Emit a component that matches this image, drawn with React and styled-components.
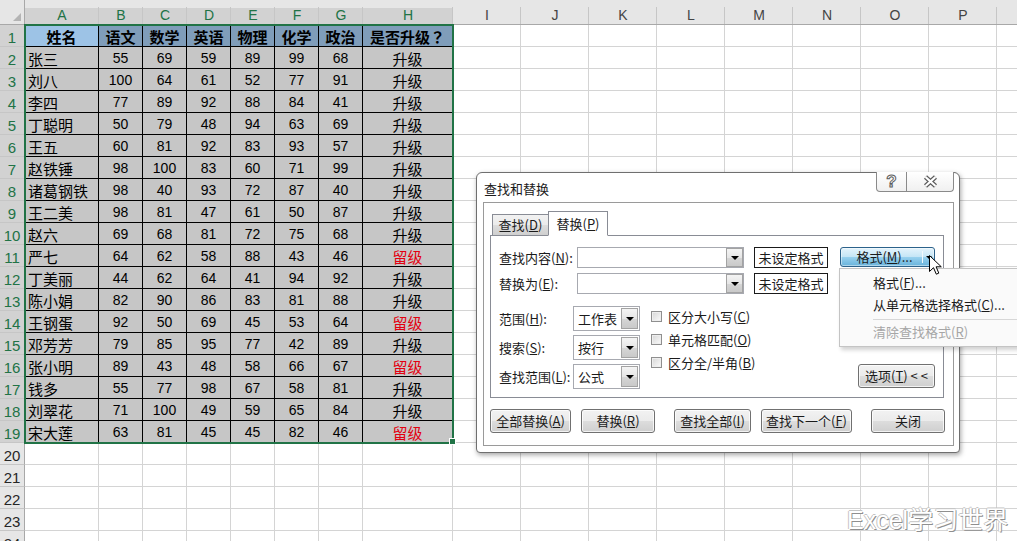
import React from "react";
import styled, { createGlobalStyle } from "styled-components";

const GlobalStyle = createGlobalStyle`
  html, body {
    margin: 0;
    padding: 0;
    background: #ffffff;
  }
  body {
    width: 1017px;
    height: 541px;
    overflow: hidden;
  }
`;

const letters = "ABCDEFGHIJKLMNOPQ".split("");
const headers = ["姓名", "语文", "数学", "英语", "物理", "化学", "政治", "是否升级？"];
const students = [
  ["张三", 55, 69, 59, 89, 99, 68, "升级"],
  ["刘八", 100, 64, 61, 52, 77, 91, "升级"],
  ["李四", 77, 89, 92, 88, 84, 41, "升级"],
  ["丁聪明", 50, 79, 48, 94, 63, 69, "升级"],
  ["王五", 60, 81, 92, 83, 93, 57, "升级"],
  ["赵铁锤", 98, 100, 83, 60, 71, 99, "升级"],
  ["诸葛钢铁", 98, 40, 93, 72, 87, 40, "升级"],
  ["王二美", 98, 81, 47, 61, 50, 87, "升级"],
  ["赵六", 69, 68, 81, 72, 75, 68, "升级"],
  ["严七", 64, 62, 58, 88, 43, 46, "留级"],
  ["丁美丽", 44, 62, 64, 41, 94, 92, "升级"],
  ["陈小娟", 82, 90, 86, 83, 81, 88, "升级"],
  ["王钢蛋", 92, 50, 69, 45, 53, 64, "留级"],
  ["邓芳芳", 79, 85, 95, 77, 42, 89, "升级"],
  ["张小明", 89, 43, 48, 58, 66, 67, "留级"],
  ["钱多", 55, 77, 98, 67, 58, 81, "升级"],
  ["刘翠花", 71, 100, 49, 59, 65, 84, "升级"],
  ["宋大莲", 63, 81, 45, 45, 82, 46, "留级"],
];
const ROWS = 24;

/* ---------- spreadsheet ---------- */

const Page = styled.div`
  position: relative;
  width: 1017px;
  height: 541px;
  overflow: hidden;
  font-family: "Liberation Sans", "Noto Sans CJK SC", sans-serif;
`;

const Sheet = styled.div`
  display: grid;
  grid-template-columns: 25px 74px repeat(6, 44px) 90px repeat(9, 68px);
  grid-template-rows: 25px repeat(${ROWS}, 22px);
  width: max-content;
`;

const Corner = styled.div`
  box-sizing: border-box;
  display: flex;
  align-items: flex-end;
  justify-content: flex-end;
  padding: 0 3px 3px 0;
  background: #e6e6e6;
  border-right: 1px solid #a8a8a8;
  border-bottom: 1px solid #a8a8a8;
`;

const ColHead = styled.div`
  box-sizing: border-box;
  display: flex;
  align-items: flex-end;
  justify-content: center;
  padding-bottom: 1px;
  line-height: 16px;
  font-size: 14px;
  color: ${(p) => (p.$selected ? "#217346" : "#444444")};
  background:
    linear-gradient(#c6c6c6, #c6c6c6) right bottom / 1px 17px no-repeat,
    linear-gradient(#e6e6e6 0 8px, ${(p) => (p.$selected ? "#d2d2d2" : "#e6e6e6")} 8px);
  border-bottom: 1px solid #a8a8a8;
`;

const RowHead = styled.div`
  box-sizing: border-box;
  display: flex;
  align-items: center;
  justify-content: center;
  padding-top: 3px;
  font-size: 15px;
  color: ${(p) => (p.$selected ? "#217346" : "#262626")};
  background: ${(p) => (p.$selected ? "#d2d2d2" : "#e6e6e6")};
  border-right: 1px solid #a8a8a8;
  border-bottom: 1px solid #c6c6c6;
`;

const Cell = styled.div`
  box-sizing: border-box;
  display: flex;
  align-items: center;
  justify-content: ${(p) => (p.$left ? "flex-start" : "center")};
  padding: 1px 0 0 ${(p) => (p.$left ? "3px" : "0")};
  background: ${(p) => p.$fill || "#ffffff"};
  border-right: 1px solid ${(p) => (p.$table ? "#000000" : "#d4d4d4")};
  border-bottom: 1px solid ${(p) => (p.$table ? "#000000" : "#d4d4d4")};
  color: ${(p) => (p.$red ? "#e3000f" : "#000000")};
  font-weight: ${(p) => (p.$bold ? 700 : 400)};
  font-size: ${(p) => (p.$num ? "14px" : "15px")};
  white-space: nowrap;
  overflow: hidden;
`;

const FullWidth = styled.span`
  font-family: "Noto Sans CJK TC", "Noto Sans CJK SC", sans-serif;
`;

const Selection = styled.div`
  position: absolute;
  left: 24px;
  top: 24px;
  width: 430px;
  height: 420px;
  box-sizing: border-box;
  border: 2px solid #217346;
  pointer-events: none;
`;

const FillHandle = styled.div`
  position: absolute;
  left: 449px;
  top: 438px;
  width: 7px;
  height: 7px;
  box-sizing: border-box;
  background: #217346;
  border: 1px solid #ffffff;
`;

/* ---------- dialog ---------- */

const Dialog = styled.div`
  position: absolute;
  left: 476px;
  top: 172px;
  width: 484px;
  height: 281px;
  box-sizing: border-box;
  display: flex;
  flex-direction: column;
  background: #ffffff;
  border: 1px solid #6f6f6f;
  border-radius: 6px 6px 4px 4px;
  box-shadow: 1px 2px 5px rgba(0, 0, 0, 0.35);
  font-family: "Noto Sans CJK SC", "Liberation Sans", sans-serif;
  font-size: 13px;
  line-height: 16px;
  color: #1b1b1b;
`;

const TitleBar = styled.div`
  flex: none;
  height: 29px;
  display: flex;
  align-items: flex-start;
  justify-content: space-between;
  padding-left: 7px;
`;

const Title = styled.div`
  margin-top: 8px;
  font-size: 13px;
`;

const Caption = styled.div`
  display: flex;
  height: 20px;
  margin: -1px 5px 0 0;
  box-sizing: border-box;
  border: 1px solid #8a8a8a;
  border-top: none;
  border-radius: 0 0 4px 4px;
  background: linear-gradient(#ffffff, #f0f0f0);
`;

const CaptionButton = styled.div`
  width: ${(p) => p.$w}px;
  display: flex;
  align-items: center;
  justify-content: center;
  & + & {
    border-left: 1px solid #8a8a8a;
  }
`;

const HelpGlyph = styled.span`
  font-family: "Liberation Sans", sans-serif;
  font-weight: 700;
  font-size: 17px;
  color: #ffffff;
  -webkit-text-stroke: 1px #5c5c5c;
`;

const Client = styled.div`
  flex: 1;
  margin: 0 5px 6px 6px;
  border: 1px solid #9a9a9a;
  padding: 8px 0 0 6px;
  display: flex;
  flex-direction: column;
`;

const TabStrip = styled.div`
  display: flex;
  align-items: flex-end;
  height: 24px;
  padding-left: 2px;
  position: relative;
  z-index: 1;
`;

const Tab = styled.div`
  box-sizing: border-box;
  width: ${(p) => p.$w}px;
  height: ${(p) => (p.$active ? 25 : 21)}px;
  margin-bottom: ${(p) => (p.$active ? "-1px" : "0")};
  display: flex;
  align-items: center;
  justify-content: center;
  border: 1px solid #898c95;
  border-bottom: ${(p) => (p.$active ? "1px solid #ffffff" : "none")};
  background: ${(p) =>
    p.$active
      ? "#ffffff"
      : "linear-gradient(#f2f2f2 0%, #ebebeb 50%, #dddddd 51%, #cfcfcf 100%)"};
  & + & {
    margin-left: -1px;
  }
`;

const Pane = styled.div`
  width: 454px;
  box-sizing: border-box;
  border: 1px solid #898c95;
  padding: 11px 8px 8px 8px;
  display: flex;
  flex-direction: column;
`;

const FieldRow = styled.div`
  display: flex;
  align-items: center;
  height: 21px;
  & + & {
    margin-top: 5px;
  }
`;

const Label = styled.div`
  flex: none;
  width: ${(p) => p.$w}px;
  white-space: nowrap;
`;

const Key = styled.span`
  text-decoration: underline;
  text-underline-offset: 1px;
`;

const Combo = styled.div`
  box-sizing: border-box;
  width: ${(p) => p.$w}px;
  height: 100%;
  display: flex;
  align-items: stretch;
  border: 1px solid #a7a9b0;
  background: #ffffff;
`;

const ComboText = styled.div`
  flex: 1;
  display: flex;
  align-items: center;
  padding-left: 4px;
  white-space: nowrap;
`;

const DropButton = styled.div`
  box-sizing: border-box;
  width: 17px;
  margin: ${(p) => (p.$inset ? "1px" : "0")};
  display: flex;
  align-items: center;
  justify-content: center;
  border: 1px solid #a3a3a3;
  background: linear-gradient(#f4f4f4 0%, #e6e6e6 50%, #d6d6d6 51%, #c9c9c9 100%);
`;

const Arrow = styled.div`
  width: 0;
  height: 0;
  border-left: 4px solid transparent;
  border-right: 4px solid transparent;
  border-top: 4px solid #000000;
`;

const FormatBox = styled.div`
  box-sizing: border-box;
  width: 74px;
  height: 100%;
  margin-left: 10px;
  display: flex;
  align-items: center;
  justify-content: center;
  border: 1px solid #1a1a1a;
  white-space: nowrap;
`;

const SplitButton = styled.div`
  box-sizing: border-box;
  width: 95px;
  height: 20px;
  margin: -1px 0 0 12px;
  display: flex;
  border: 1px solid #2c628b;
  border-radius: 3px;
  background: linear-gradient(#e5f4fc 0%, #c4e5f6 50%, #98d1ef 51%, #68b3db 100%);
  box-shadow: inset 0 0 0 1px rgba(255, 255, 255, 0.45);
`;

const SplitMain = styled.div`
  flex: 1;
  display: flex;
  align-items: center;
  justify-content: center;
  padding-left: 6px;
  white-space: nowrap;
`;

const SplitArrow = styled.div`
  width: 11px;
  display: flex;
  align-items: center;
  justify-content: center;
  border-left: 1px solid #f2f9fd;
  margin: 3px 0;
`;

const SmallArrow = styled(Arrow)`
  border-left-width: 3px;
  border-right-width: 3px;
  border-top-width: 3px;
`;

const Lower = styled.div`
  display: flex;
  margin-top: 12px;
`;

const SelectColumn = styled.div`
  display: flex;
  flex-direction: column;
`;

const SelectRow = styled.div`
  display: flex;
  align-items: center;
  height: 25px;
  & + & {
    margin-top: 4px;
  }
`;

const CheckColumn = styled.div`
  display: flex;
  flex-direction: column;
  margin: -1px 0 0 11px;
`;

const CheckRow = styled.div`
  display: flex;
  align-items: center;
  gap: 6px;
  height: 23px;
  white-space: nowrap;
`;

const CheckBox = styled.div`
  box-sizing: border-box;
  width: 11px;
  height: 11px;
  border: 1px solid #8f8f8f;
  background: linear-gradient(135deg, #d6d6d6, #fbfbfb);
  box-shadow: inset 0 0 0 1px #eeeeee;
`;

const Button = styled.div`
  box-sizing: border-box;
  flex: none;
  width: ${(p) => p.$w}px;
  height: 24px;
  margin-left: ${(p) => p.$gap || 0}px;
  display: flex;
  align-items: center;
  justify-content: center;
  border: 1px solid #707070;
  border-radius: 3px;
  background: linear-gradient(#f2f2f2 0%, #ebebeb 49%, #dddddd 50%, #cfcfcf 100%);
  box-shadow: inset 0 0 0 1px rgba(255, 255, 255, 0.75);
  white-space: nowrap;
`;

const OptionsButton = styled(Button)`
  margin-left: auto;
  align-self: flex-end;
  margin-bottom: 1px;
`;

const ButtonRow = styled.div`
  display: flex;
  margin-top: 11px;
`;

/* ---------- overlays ---------- */

const Menu = styled.div`
  position: absolute;
  left: 839px;
  top: 268px;
  width: 200px;
  box-sizing: border-box;
  padding: 3px 0;
  background: #fafafa;
  border: 1px solid #c4c4c4;
  box-shadow: 2px 3px 4px rgba(0, 0, 0, 0.18);
  font-family: "Noto Sans CJK SC", "Liberation Sans", sans-serif;
  font-size: 13px;
  line-height: 16px;
`;

const MenuItem = styled.div`
  height: 22px;
  display: flex;
  align-items: center;
  padding-left: 33px;
  color: ${(p) => (p.$disabled ? "#a6a6a6" : "#1b1b1b")};
  white-space: nowrap;
`;

const MenuSeparator = styled.div`
  height: 1px;
  margin: 3px 0 1px 33px;
  background: #d7d7d7;
`;

const Pointer = styled.svg`
  position: absolute;
  left: 929px;
  top: 255px;
`;

const Watermark = styled.div`
  position: absolute;
  left: 847px;
  top: 500px;
  font-family: "Liberation Sans", "Noto Sans CJK SC", sans-serif;
  font-size: 25px;
  color: #ffffff;
  text-shadow: 1px 1px 0 #8f8f8f, -1px 0 0 #c4c4c4, 0 -1px 0 #c4c4c4;
  white-space: nowrap;
  pointer-events: none;
`;

function Spreadsheet() {
  const cells = [];
  cells.push(
    <Corner key="corner">
      <svg width="8" height="8" viewBox="0 0 8 8">
        <path d="M8 0 L8 8 L0 8 Z" fill="#b4b4b4" />
      </svg>
    </Corner>
  );
  letters.forEach((l, i) => {
    cells.push(
      <ColHead key={`h${l}`} $selected={i < 8}>
        {l}
      </ColHead>
    );
  });
  for (let r = 1; r <= ROWS; r++) {
    cells.push(
      <RowHead key={`r${r}`} $selected={r <= 19}>
        {r}
      </RowHead>
    );
    letters.forEach((l, c) => {
      const key = `${l}${r}`;
      if (r <= 19 && c < 8) {
        if (r === 1) {
          const text = headers[c];
          cells.push(
            <Cell key={key} $table $bold $fill={c === 0 ? "#9dc3e6" : "#7f9dba"}>
              {text.endsWith("？") ? (
                <>
                  {text.slice(0, -1)}
                  <FullWidth>？</FullWidth>
                </>
              ) : (
                text
              )}
            </Cell>
          );
        } else {
          const value = students[r - 2][c];
          cells.push(
            <Cell
              key={key}
              $table
              $fill="#c6c6c6"
              $left={c === 0}
              $num={typeof value === "number"}
              $red={value === "留级"}
            >
              {value}
            </Cell>
          );
        }
      } else {
        cells.push(<Cell key={key} />);
      }
    });
  }
  return <Sheet>{cells}</Sheet>;
}

function FindReplaceDialog() {
  return (
    <Dialog>
      <TitleBar>
        <Title>查找和替换</Title>
        <Caption>
          <CaptionButton $w={29}>
            <HelpGlyph>?</HelpGlyph>
          </CaptionButton>
          <CaptionButton $w={46}>
            <svg width="15" height="13" viewBox="0 0 15 13">
              <path d="M2.5 2 L12.5 11 M12.5 2 L2.5 11" stroke="#5c5c5c" strokeWidth="4.5" />
              <path d="M2.5 2 L12.5 11 M12.5 2 L2.5 11" stroke="#ffffff" strokeWidth="2.2" />
            </svg>
          </CaptionButton>
        </Caption>
      </TitleBar>
      <Client>
        <TabStrip>
          <Tab $w={57}>
            查找(<Key>D</Key>)
          </Tab>
          <Tab $w={60} $active>
            替换(<Key>P</Key>)
          </Tab>
        </TabStrip>
        <Pane>
          <FieldRow>
            <Label $w={78}>
              查找内容(<Key>N</Key>):
            </Label>
            <Combo $w={167}>
              <ComboText />
              <DropButton>
                <Arrow />
              </DropButton>
            </Combo>
            <FormatBox>未设定格式</FormatBox>
            <SplitButton>
              <SplitMain>
                格式(<Key>M</Key>)...
              </SplitMain>
              <SplitArrow>
                <SmallArrow />
              </SplitArrow>
            </SplitButton>
          </FieldRow>
          <FieldRow>
            <Label $w={78}>
              替换为(<Key>E</Key>):
            </Label>
            <Combo $w={167}>
              <ComboText />
              <DropButton>
                <Arrow />
              </DropButton>
            </Combo>
            <FormatBox>未设定格式</FormatBox>
          </FieldRow>
          <Lower>
            <SelectColumn>
              <SelectRow>
                <Label $w={74}>
                  范围(<Key>H</Key>):
                </Label>
                <Combo $w={67}>
                  <ComboText>工作表</ComboText>
                  <DropButton $inset>
                    <Arrow />
                  </DropButton>
                </Combo>
              </SelectRow>
              <SelectRow>
                <Label $w={74}>
                  搜索(<Key>S</Key>):
                </Label>
                <Combo $w={67}>
                  <ComboText>按行</ComboText>
                  <DropButton $inset>
                    <Arrow />
                  </DropButton>
                </Combo>
              </SelectRow>
              <SelectRow>
                <Label $w={74}>
                  查找范围(<Key>L</Key>):
                </Label>
                <Combo $w={67}>
                  <ComboText>公式</ComboText>
                  <DropButton $inset>
                    <Arrow />
                  </DropButton>
                </Combo>
              </SelectRow>
            </SelectColumn>
            <CheckColumn>
              <CheckRow>
                <CheckBox />
                <span>
                  区分大小写(<Key>C</Key>)
                </span>
              </CheckRow>
              <CheckRow>
                <CheckBox />
                <span>
                  单元格匹配(<Key>O</Key>)
                </span>
              </CheckRow>
              <CheckRow>
                <CheckBox />
                <span>
                  区分全/半角(<Key>B</Key>)
                </span>
              </CheckRow>
            </CheckColumn>
            <OptionsButton $w={77}>
              选项(<Key>T</Key>)&nbsp;&lt; &lt;
            </OptionsButton>
          </Lower>
        </Pane>
        <ButtonRow>
          <Button $w={81}>
            全部替换(<Key>A</Key>)
          </Button>
          <Button $w={74} $gap={10}>
            替换(<Key>R</Key>)
          </Button>
          <Button $w={77} $gap={19}>
            查找全部(<Key>I</Key>)
          </Button>
          <Button $w={91} $gap={10}>
            查找下一个(<Key>F</Key>)
          </Button>
          <Button $w={74} $gap={19}>
            关闭
          </Button>
        </ButtonRow>
      </Client>
    </Dialog>
  );
}

export default function App() {
  return (
    <Page>
      <GlobalStyle />
      <Spreadsheet />
      <Selection />
      <FillHandle />
      <FindReplaceDialog />
      <Menu>
        <MenuItem>
          格式(<Key>F</Key>)...
        </MenuItem>
        <MenuItem>
          从单元格选择格式(<Key>C</Key>)...
        </MenuItem>
        <MenuSeparator />
        <MenuItem $disabled>
          清除查找格式(<Key>R</Key>)
        </MenuItem>
      </Menu>
      <Pointer width="14" height="21" viewBox="0 0 14 21">
        <path
          d="M0.5 0.5 L0.5 16.5 L4.5 12.7 L7.3 19.2 L9.8 18.1 L7.1 11.8 L12.3 11.8 Z"
          fill="#ffffff"
          stroke="#000000"
          strokeWidth="1"
          strokeLinejoin="miter"
        />
      </Pointer>
      <Watermark>Excel学习世界</Watermark>
    </Page>
  );
}
